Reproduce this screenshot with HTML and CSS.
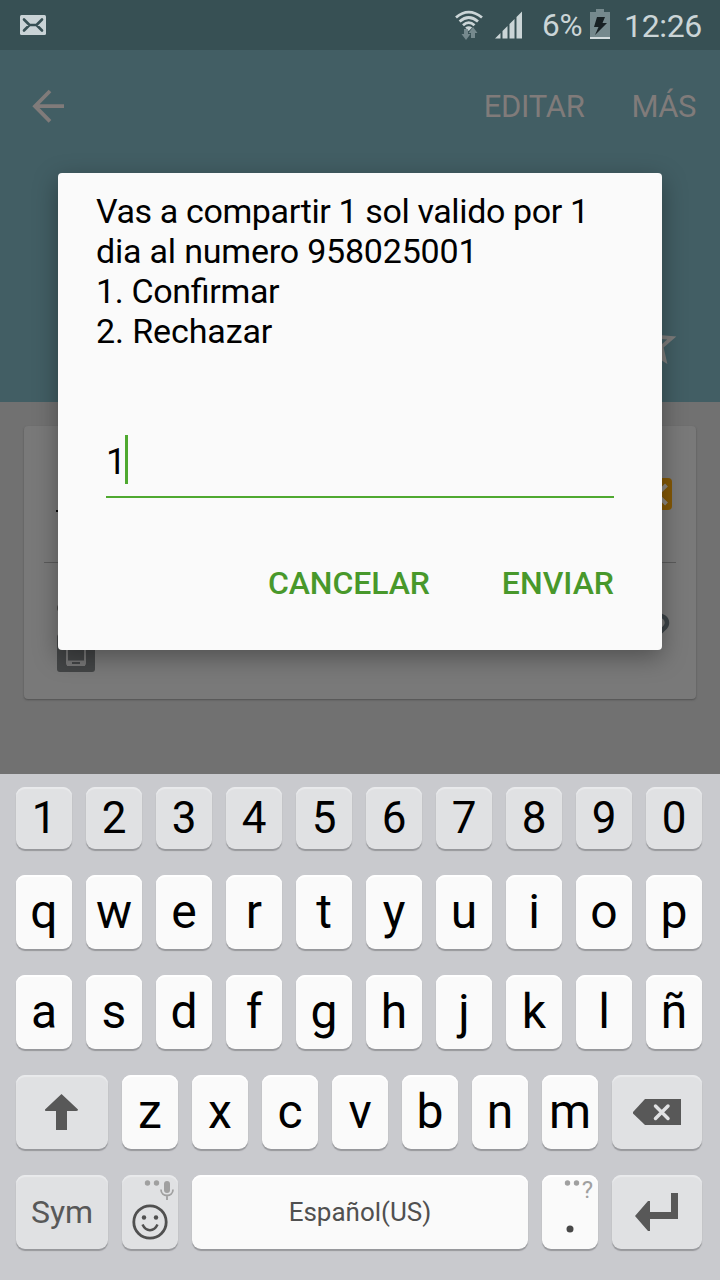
FILE: index.html
```html
<!DOCTYPE html>
<html lang="es">
<head>
<meta charset="utf-8">
<title>Compartir saldo</title>
<link rel="stylesheet" href="styles.css">
</head>
<body>
<div class="screen">
  <div class="statusbar">
    <svg class="mail" width="26" height="20" viewBox="0 0 26 20"><rect width="26" height="20" rx="1.5" fill="#c9d3d6"/><path d="M4 4.500L9.500 10L4 15.500M22 4.500L16.500 10L22 15.500M9.500 10H16.500" fill="none" stroke="#375054" stroke-width="2.6" stroke-linecap="round" stroke-linejoin="round"/></svg>
    <svg class="wifi" width="28" height="30" viewBox="0 0 28 30"><g fill="none" stroke="#cbd5d7" stroke-width="2.8"><path d="M1 7.500Q13.500-3.300 27 7.500"/><path d="M4.600 11.500Q13.700 3.500 23 11.500"/><path d="M8 15.200Q13.700 10 19.500 15.200"/></g><path d="M10.200 17.500Q13.700 14.800 17.200 17.500L13.700 21Z" fill="#cbd5d7"/><path d="M9 19H13V24H15.500L11 30L6.500 24H9ZM16 28V23H13.500L18 17L22.500 23H20V28Z" fill="#75898d"/></svg>
    <svg class="signal" width="28" height="28" viewBox="0 0 28 28"><path d="M0 27.500L5.500 22V27.500ZM7.500 20L12.500 15V27.500H7.500ZM14.500 13L19.500 8V27.500H14.500ZM21.500 6L27 .5V27.500H21.500Z" fill="#cbd5d7"/></svg>
    <span class="percent">6%</span>
    <svg class="battery" width="20" height="30" viewBox="0 0 20 30"><path d="M6 0H14V3H20V30H0V3H6Z" fill="#75898d"/><path d="M0 28H20V30H0Z" fill="#d3dcde"/><path d="M7 8H15L12.500 14H17L5 26L8.500 18H4Z" fill="#172023"/></svg>
    <span class="clock">12:26</span>
  </div>
  <header class="header">
    <div class="actions">
      <svg width="34" height="34" viewBox="0 0 34 34"><path d="M19 2L4 17.200L19 32.400M4 17.200H33" fill="none" stroke="#807b7a" stroke-width="3.800"/></svg>
      <span class="edit">EDITAR</span>
      <span class="more">MÁS</span>
    </div>
    <svg class="star" width="56" height="56" viewBox="0 0 24 24"><path d="M22 9.240L14.810 8.620L12 2L9.190 8.630L2 9.240L7.460 13.970L5.820 21L12 17.270L18.180 21L16.550 13.970ZM12 15.400L8.240 17.670L9.240 13.390L5.920 10.510L10.300 10.130L12 6.100L13.710 10.140L18.090 10.520L14.770 13.400L15.770 17.680Z" fill="#7d7c7b"/></svg>
  </header>
  <main class="content">
    <section class="card">
      <div class="call">
        <span class="dash"></span>
        <svg width="32" height="32" viewBox="0 0 32 32"><rect width="32" height="32" rx="4" fill="#835806"/><path d="M7 7L26.500 26M26.500 7L7 26" stroke="#8c8882" stroke-width="4"/></svg>
      </div>
      <div class="info">
        <div class="badges"><span class="dot"></span>
        <svg width="38" height="38" viewBox="0 0 38 38"><rect width="38" height="38" rx="3" fill="#434546"/><rect x="10" y="6" width="18" height="25" rx="2" fill="#434546" stroke="#777" stroke-width="2"/><path d="M10 26.500H28V32H10Z" fill="#777"/><path d="M15 28H23V30H15Z" fill="#434546"/></svg></div>
        <svg class="help" width="24" height="34" viewBox="0 0 24 34"><path d="M3 11C3 1 21 1 21 11C21 18 13 17 12 25" fill="none" stroke="#3c4347" stroke-width="4.500"/></svg>
      </div>
    </section>
  </main>
  <div class="keyboard">
    <div class="row numbers"><b>1</b><b>2</b><b>3</b><b>4</b><b>5</b><b>6</b><b>7</b><b>8</b><b>9</b><b>0</b></div>
    <div class="row"><b>q</b><b>w</b><b>e</b><b>r</b><b>t</b><b>y</b><b>u</b><b>i</b><b>o</b><b>p</b></div>
    <div class="row"><b>a</b><b>s</b><b>d</b><b>f</b><b>g</b><b>h</b><b>j</b><b>k</b><b>l</b><b>ñ</b></div>
    <div class="row">
      <b class="gray left"><svg width="92" height="74" viewBox="0 0 92 74"><path d="M45.500 19L62 34.500Q62 36 60 36H51V55H40V36H31Q28.500 36 29 34.500Z" fill="#585858"/></svg></b>
      <b>z</b><b>x</b><b>c</b><b>v</b><b>b</b><b>n</b><b>m</b>
      <b class="gray right"><svg width="90" height="74" viewBox="0 0 90 74"><path d="M21 37L33 24H69V50H33L21 38.500Z" fill="#585858"/><path d="M43.500 31L56 43.500M56 31L43.500 43.500" stroke="#e0e1e3" stroke-width="3.500" stroke-linecap="round"/></svg></b>
    </div>
    <div class="row">
      <b class="gray left sym">Sym</b>
      <b class="gray icon"><svg width="56" height="74" viewBox="0 0 56 74"><g fill="#a0a0a0"><circle cx="25.500" cy="8" r="2.700"/><circle cx="34.500" cy="8" r="2.700"/><rect x="42" y="6" width="6" height="12" rx="3"/></g><path d="M39 14.500C39 22.500 51 22.500 51 14.500M45 20.500V25" fill="none" stroke="#a0a0a0" stroke-width="1.800"/><circle cx="28" cy="47" r="16.200" fill="none" stroke="#505050" stroke-width="2.800"/><circle cx="22" cy="42.500" r="2.200" fill="#505050"/><circle cx="34" cy="42.500" r="2.200" fill="#505050"/><path d="M20.500 49.500C24 57 32 57 35.500 49.500" fill="none" stroke="#505050" stroke-width="2.500"/></svg></b>
      <b class="space">Español(US)</b>
      <b class="icon"><svg width="56" height="74" viewBox="0 0 56 74"><circle cx="25.500" cy="8" r="2.700" fill="#a0a0a0"/><circle cx="34.500" cy="8" r="2.700" fill="#a0a0a0"/><circle cx="28" cy="54" r="3.500" fill="#484848"/></svg><span class="alt">?</span></b>
      <b class="gray right"><svg width="90" height="74" viewBox="0 0 90 74"><path d="M23 41L36 26H38V37H59V18H66V44H38V56H36Z" fill="#585858"/></svg></b>
    </div>
  </div>
  <div class="dialog">
    <p class="message"><span class="wide">Vas a compartir 1 sol valido por 1</span><br><span class="number">dia al numero 958025001</span><br><span class="option">1. Confirmar</span><br><span class="last">2. Rechazar</span></p>
    <div class="field"><span>1</span><span class="caret"></span></div>
    <div class="buttons"><span class="cancel">CANCELAR</span><span class="send">ENVIAR</span></div>
  </div>
</div>
</body>
</html>
```

FILE: styles.css
```css
* { box-sizing: border-box; }
body { margin: 0; font-family: Roboto, "Noto Sans", sans-serif; }
svg { display: block; flex: none; }
.screen { position: relative; width: 720px; height: 1280px; overflow: hidden; display: flex; flex-direction: column; background: #717171; }
.statusbar { height: 50px; flex: none; display: flex; align-items: flex-start; padding-left: 20px; background: #375054; color: #cbd5d7; font-size: 32px; line-height: 52px; white-space: nowrap; }
.mail { margin-top: 15px; }
.wifi { margin: 10px 0 0 409px; }
.signal { margin: 11px 0 0 12px; }
.percent { margin-left: 19px; width: 48px; font-size: 31.5px; letter-spacing: -.2px; }
.battery { margin-top: 9px; }
.clock { margin-left: 14px; letter-spacing: -.35px; }
.header { height: 352px; flex: none; background: #425e64; padding: 0 24px 0 31px; }
.actions { height: 112px; display: flex; align-items: center; color: #807b7a; font-size: 31px; }
.edit { margin-left: auto; letter-spacing: -.3px; }
.more { margin-left: 47px; letter-spacing: -.5px; }
.star { margin: 153px 15px 0 auto; }
.content { height: 372px; flex: none; padding: 24px; }
.card { height: 273px; border-radius: 4px; background: #797979; box-shadow: 0 1px 2px #505050; padding: 0 20px; }
.call { height: 137px; border-bottom: 1px solid #5b5b5b; display: flex; justify-content: space-between; align-items: flex-start; padding: 52px 4px 0 12px; }
.dash { width: 3px; height: 2px; margin-top: 32px; background: #050505; }
.info { display: flex; justify-content: space-between; padding: 41px 6px 0 13px; }
.badges { display: flex; flex-direction: column; gap: 22px; }
.dot { width: 8px; height: 8px; border-radius: 4px; background: #444; }
.help { margin-top: 8px; }

.dialog { position: absolute; left: 58px; top: 173px; width: 604px; height: 477px; padding: 18px 48px 0 38px; border-radius: 4px; background: #fafafa; box-shadow: 0 7px 24px rgba(0,0,0,.34); color: #000; }
.message { margin: 0; font-size: 34px; line-height: 40px; white-space: nowrap; font-feature-settings: "liga" 1; }
.wide { letter-spacing: -.38px; }
.number { letter-spacing: -.2px; }
.option { letter-spacing: -.34px; }
.last { letter-spacing: -.1px; }
.field { height: 64px; margin: 83px 0 0 10px; display: flex; align-items: flex-start; border-bottom: 2px solid #4fa930; font-size: 36px; line-height: 54px; padding-top: 1px; }
.caret { width: 3px; height: 49px; margin-left: -1px; background: #4fa930; }
.buttons { display: flex; justify-content: flex-end; gap: 72px; margin-top: 65px; color: #48982b; font-size: 32px; line-height: 40px; font-weight: 500; }
.cancel { letter-spacing: -.1px; }

.keyboard { height: 506px; flex: none; background: #c9cace; padding: 13px 18px 0 16px; display: flex; flex-direction: column; gap: 26px; }
.row { display: flex; gap: 14px; height: 74px; flex: none; }
.row b { position: relative; width: 56px; height: 100%; flex: none; display: flex; align-items: center; justify-content: center; border-radius: 9px; background: #fafafa; box-shadow: 0 2px 1px #97989c, inset 0 2px 1px #fff; color: #000; font-size: 48px; line-height: 74px; font-weight: 400; }
.row.numbers { height: 62px; }
.row.numbers b { font-size: 44px; line-height: 62px; background: #e0e1e3; box-shadow: 0 2px 1px #97989c, inset 0 2px 1px #e9eaec; }
.row .gray { background: #e0e1e3; box-shadow: 0 2px 1px #97989c, inset 0 2px 1px #e9eaec; color: #585858; }
.row .left { width: 92px; }
.row .right { width: 90px; }
.row .sym { font-size: 32px; }
.row .space { width: 336px; font-size: 26px; color: #505050; }
.alt { position: absolute; right: 5px; top: 2px; font-size: 24px; line-height: 26px; color: #a0a0a0; }
```
